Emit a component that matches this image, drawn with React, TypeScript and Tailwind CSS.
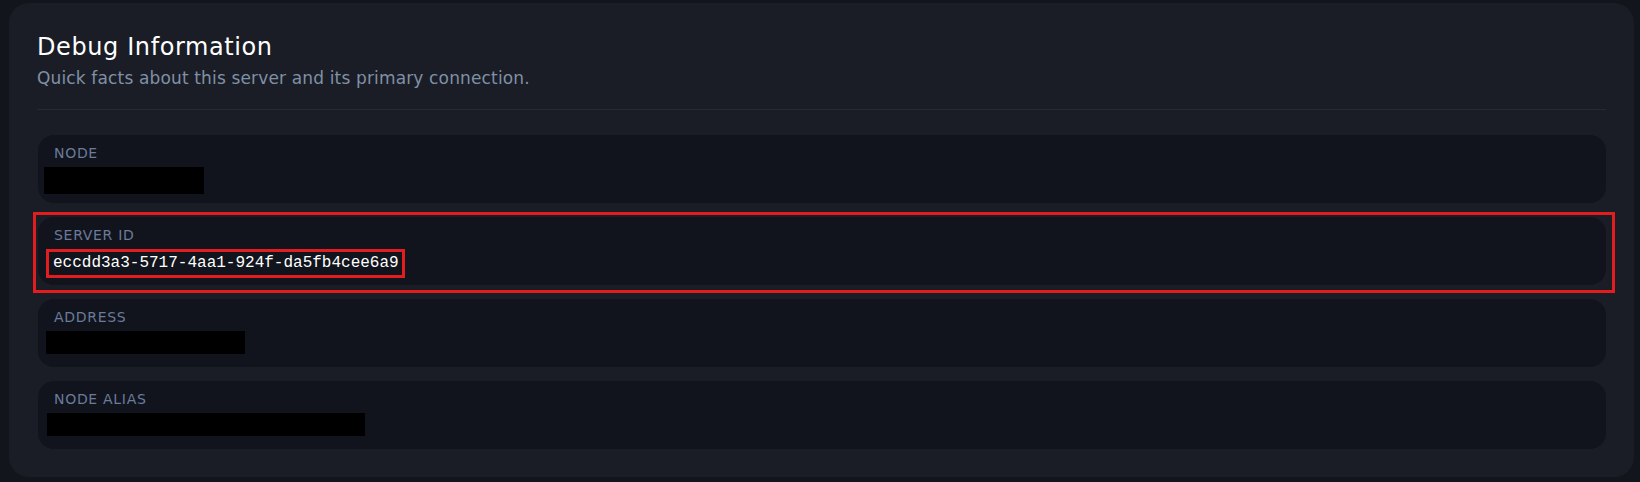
import type { ReactNode } from "react";

type Field = {
  label: string;
  value?: string;
  redact?: { width: string; shift: string; height: string };
  highlight?: boolean;
};

const fields: Field[] = [
  {
    label: "Node",
    redact: { width: "w-[160px]", shift: "-ml-[10px]", height: "h-[27px]" },
  },
  {
    label: "Server ID",
    value: "eccdd3a3-5717-4aa1-924f-da5fb4cee6a9",
    highlight: true,
  },
  {
    label: "Address",
    redact: { width: "w-[199px]", shift: "-ml-[8px]", height: "h-[23px] mt-[3px]" },
  },
  {
    label: "Node Alias",
    redact: { width: "w-[318px]", shift: "-ml-[7px]", height: "h-[23px] mt-[2px]" },
  },
];

function FieldRow({ field }: { field: Field }) {
  let content: ReactNode = null;

  if (field.redact) {
    content = (
      <span
        className={`block bg-black ${field.redact.width} ${field.redact.height} ${field.redact.shift}`}
      />
    );
  } else if (field.value) {
    content = (
      <span className="-ml-[8px] inline-block border-[3px] border-[#e11d1f] pl-[4px] pr-[3px] font-['Liberation_Mono',monospace] text-[16px] leading-[23px] text-white">
        {field.value}
      </span>
    );
  }

  return (
    <div className="relative ml-px rounded-2xl bg-[#11141c] px-4 pb-2 pt-[8px]">
      <p className="text-[14px] uppercase leading-5 tracking-[0.7px] text-[#6a7b9b]">
        {field.label}
      </p>
      <div className="mt-[4px] h-7">{content}</div>
      {field.highlight && (
        <span className="pointer-events-none absolute -bottom-[8px] -left-[5px] -right-[9px] -top-[5px] border-[3px] border-[#e11d1f]" />
      )}
    </div>
  );
}

export default function App() {
  return (
    <div className="min-h-screen bg-[#12151b] pb-[5px] pl-[9px] pr-[6px] pt-[3px] font-['DejaVu_Sans',sans-serif]">
      <div className="rounded-[20px] bg-[#1a1d25] p-7">
        <div className="border-b border-[#252a35] pb-[19px]">
          <h1 className="text-[24px] font-medium leading-8 tracking-[0.6px] text-white">
            Debug Information
          </h1>
          <p className="mt-[3px] text-[17px] leading-6 tracking-[0.15px] text-[#8090a6]">
            Quick facts about this server and its primary connection.
          </p>
        </div>

        <div className="mt-[25px] flex flex-col gap-[14px]">
          {fields.map((field) => (
            <FieldRow key={field.label} field={field} />
          ))}
        </div>
      </div>
    </div>
  );
}
